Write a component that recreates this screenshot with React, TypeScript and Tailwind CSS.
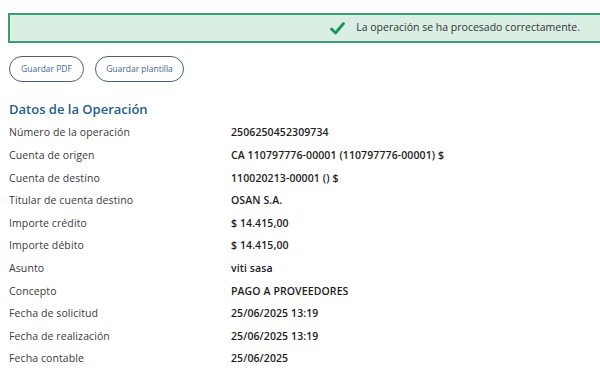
import React from "react";

const rows: [string, string][] = [
  ["Número de la operación", "2506250452309734"],
  ["Cuenta de origen", "CA 110797776-00001 (110797776-00001) $"],
  ["Cuenta de destino", "110020213-00001 () $"],
  ["Titular de cuenta destino", "OSAN S.A."],
  ["Importe crédito", "$ 14.415,00"],
  ["Importe débito", "$ 14.415,00"],
  ["Asunto", "viti sasa"],
  ["Concepto", "PAGO A PROVEEDORES"],
  ["Fecha de solicitud", "25/06/2025 13:19"],
  ["Fecha de realización", "25/06/2025 13:19"],
  ["Fecha contable", "25/06/2025"],
];

export default function App() {
  return (
    <div
      className="w-[600px] h-[382px] overflow-hidden bg-white"
      style={{ fontFamily: '"Open Sans", sans-serif' }}
    >
      <div className="pl-2 pt-[13px]">
        <div className="-mr-4 h-[30px] border-2 border-[#3a9d73] bg-[#d9efe4] flex items-center justify-end pr-[34px]">
          <svg width="15" height="13" viewBox="0 0 15 13" className="mr-[11px]">
            <path d="M1.5 7 L5.5 11 L13.5 1.5" fill="none" stroke="#1e9460" strokeWidth="2.8" strokeLinecap="round" strokeLinejoin="round" />
          </svg>
          <span className="text-[10.5px] text-[#333]">La operación se ha procesado correctamente.</span>
        </div>
        <div className="flex gap-[11px] mt-[13px] pl-px">
          <button className="h-[26px] w-[75px] rounded-full border border-[#4a6078] text-[8.5px] text-[#49698a]">
            Guardar PDF
          </button>
          <button className="h-[26px] w-[89px] rounded-full border border-[#4a6078] text-[8.5px] text-[#49698a]">
            Guardar plantilla
          </button>
        </div>
        <h2 className="mt-[18px] pl-px text-[13px] font-semibold text-[#21608e] leading-[18px]">
          Datos de la Operación
        </h2>
        <div className="mt-[4px] pl-px">
          {rows.map(([k, v]) => (
            <div key={k} className="flex h-[22.6px] items-center text-[10.5px]">
              <div className="w-[222px] text-[#3a3a3a] tracking-[0.1px]">{k}</div>
              <div className="font-semibold text-[#1c1c1c] tracking-[0.1px]">{v}</div>
            </div>
          ))}
        </div>
      </div>
    </div>
  );
}
